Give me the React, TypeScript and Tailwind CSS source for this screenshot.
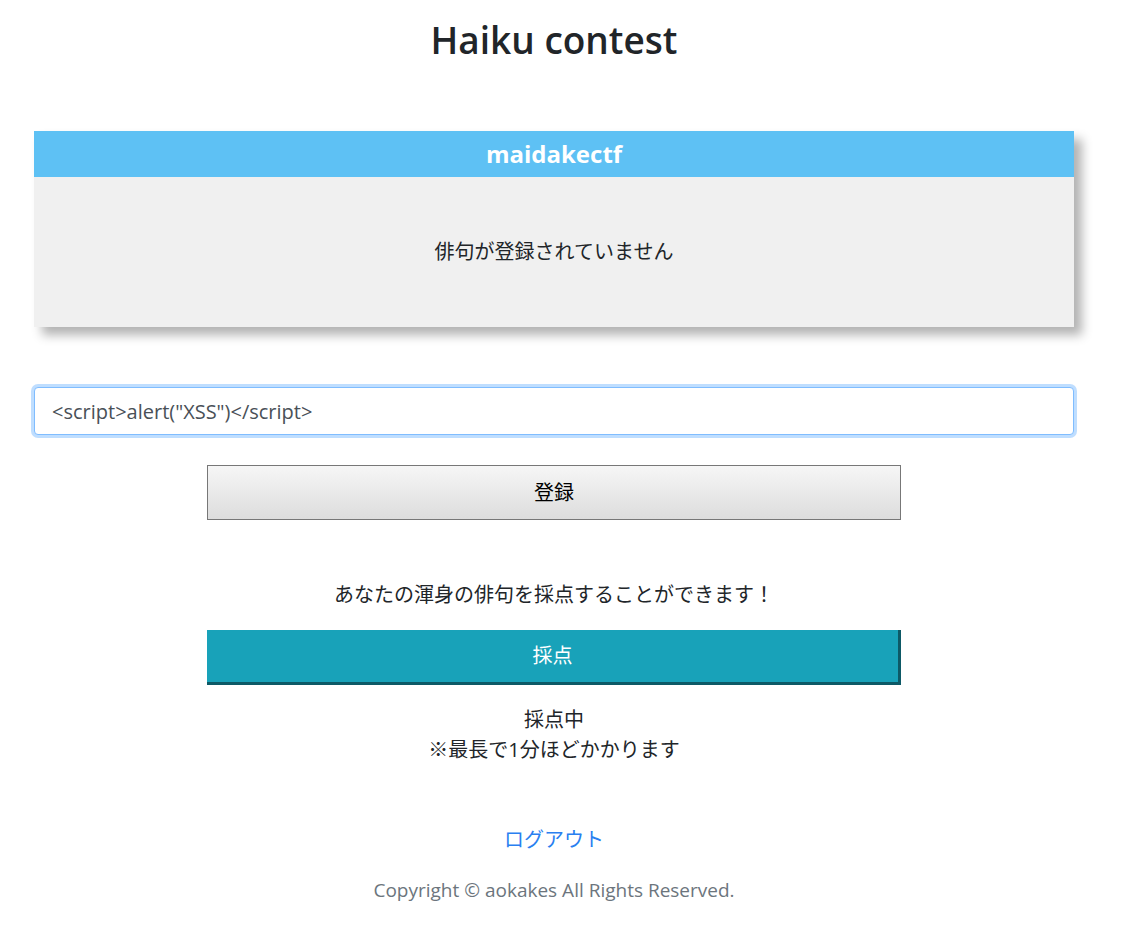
import React from 'react';

const jp = '[font-family:"Open_Sans","Noto_Sans_CJK_JP",sans-serif]';

export default function App() {
  return (
    <div className={`w-[1108px] bg-white text-[#212529] ${jp}`}>
      <h1 className="pt-[16px] text-center text-[37px] font-semibold leading-[48px] text-[#212529]">
        Haiku contest
      </h1>

      <div className="px-[34px] pt-[67px]">
        <div className="bg-[#f0f0f0] shadow-[8px_8px_10px_rgba(0,0,0,0.3)]">
          <div className="flex h-[46px] items-center justify-center bg-[#5ec1f4] text-[24px] font-bold text-white">
            maidakectf
          </div>
          <div className="flex h-[150px] items-center justify-center text-[20px]">
            俳句が登録されていません
          </div>
        </div>

        <form className="mt-[60px] flex flex-col items-center">
          <input
            type="text"
            defaultValue={'<script>alert("XSS")</script>'}
            className="h-[48px] w-full rounded-[4px] border border-[#80bdff] bg-white px-[17px] text-[20px] text-[#495057] shadow-[0_0_0_3px_rgba(0,123,255,0.25)] outline-none"
          />
          <button
            type="button"
            className="mt-[30px] h-[55px] w-[694px] border border-[#777] bg-gradient-to-b from-[#f6f6f6] to-[#dddddd] text-[20px] text-black"
          >
            登録
          </button>
        </form>

        <div className="mt-[60px] flex flex-col items-center text-[20px]">
          <p className="leading-[30px]">あなたの渾身の俳句を採点することができます！</p>
          <button
            type="button"
            className="mt-[20px] h-[55px] w-[694px] border-r-[3px] border-b-[3px] border-[#0d5966] bg-[#18a2b9] text-[20px] text-white"
          >
            採点
          </button>
          <p className="mt-[20px] text-center leading-[30px]">
            採点中
            <br />
            ※最長で1分ほどかかります
          </p>
        </div>

        <div className="mt-[60px] flex flex-col items-center pb-[30px] text-[20px]">
          <a href="#" className="leading-[30px] text-[#2a7ff0]">
            ログアウト
          </a>
          <p className="mt-[20px] text-[19px] leading-[30px] text-[#6c757d]">
            Copyright © aokakes All Rights Reserved.
          </p>
        </div>
      </div>
    </div>
  );
}
